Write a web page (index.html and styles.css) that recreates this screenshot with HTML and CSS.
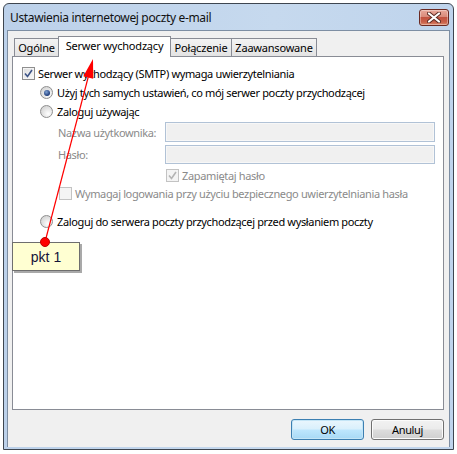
FILE: index.html
```html
<!DOCTYPE html>
<html>
<head>
<meta charset="utf-8">
<link rel="stylesheet" href="styles.css">
</head>
<body>
<div class="window">
  <div class="titlebar">
    <span class="title">Ustawienia internetowej poczty e-mail</span>
    <span class="close-btn">
      <svg width="14" height="11" viewBox="0 0 14 11"><path d="M2 1.5 L12 9.5 M12 1.5 L2 9.5" stroke="#5a2a22" stroke-width="4" stroke-linecap="round"/><path d="M2 1.5 L12 9.5 M12 1.5 L2 9.5" stroke="#fff" stroke-width="2.2" stroke-linecap="round"/></svg>
    </span>
  </div>
  <div class="client">
    <div class="tabs">
      <span class="tab tab-ogolne">Ogólne</span>
      <span class="tab tab-active">Serwer wychodzący</span>
      <span class="tab tab-polaczenie">Połączenie</span>
      <span class="tab tab-zaaw">Zaawansowane</span>
    </div>
    <div class="panel">
      <div class="row row1">
        <span class="check checked"><svg width="9" height="9" viewBox="0 0 9 9"><path d="M1 4.5 L3.5 7.5 L8 1" fill="none" stroke="#3d5487" stroke-width="1.6"/></svg></span>
        <span class="label">Serwer wychodzący (SMTP) wymaga uwierzytelniania</span>
      </div>
      <div class="row row2">
        <span class="radio selected"><span class="dot"></span></span>
        <span class="label">Użyj tych samych ustawień, co mój serwer poczty przychodzącej</span>
      </div>
      <div class="row row3">
        <span class="radio"></span>
        <span class="label">Zaloguj używając</span>
      </div>
      <div class="row row4">
        <span class="field-label disabled">Nazwa użytkownika:</span>
        <span class="input"></span>
      </div>
      <div class="row row5">
        <span class="field-label disabled">Hasło:</span>
        <span class="input"></span>
      </div>
      <div class="row row6">
        <span class="check checked dis"><svg width="9" height="9" viewBox="0 0 9 9"><path d="M1 4.5 L3.5 7.5 L8 1" fill="none" stroke="#b4b4b4" stroke-width="1.6"/></svg></span>
        <span class="label disabled">Zapamiętaj hasło</span>
      </div>
      <div class="row row7">
        <span class="check dis"></span>
        <span class="label disabled">Wymagaj logowania przy użyciu bezpiecznego uwierzytelniania hasła</span>
      </div>
      <div class="row row8">
        <span class="radio"></span>
        <span class="label">Zaloguj do serwera poczty przychodzącej przed wysłaniem poczty</span>
      </div>
    </div>
    <div class="footer">
      <span class="btn btn-default">OK</span>
      <span class="btn">Anuluj</span>
    </div>
  </div>
</div>

<svg class="arrow" width="457" height="454" viewBox="0 0 457 454">
  <line x1="45" y1="242" x2="88.5" y2="76" stroke="#ff0000" stroke-width="1.2"/>
  <polygon points="93,59 83.3,76.3 93.2,78.8" fill="#ff0000"/>
</svg>
<div class="callout">pkt 1</div>
<span class="red-dot"></span>
</body>
</html>
```

FILE: styles.css
```css
html, body {
  margin: 0;
  padding: 0;
}
body {
  width: 457px;
  height: 454px;
  background: #ffffff;
  position: relative;
  overflow: hidden;
  font-family: "Noto Sans", "Open Sans", sans-serif;
  font-size: 11px;
  letter-spacing: -0.35px;
  color: #000;
}
.window {
  margin: 3px 0 0 3px;
  width: 451px;
  height: 447px;
  box-sizing: border-box;
  border: 1px solid #3e4650;
  border-radius: 6px 6px 0 0;
  background: linear-gradient(to right, #bcd1ea, #c6d9ee 60%, #bfd4ec);
  padding: 0 3px 2px 3px;
  display: flex;
  flex-direction: column;
}
.titlebar {
  height: 26px;
  display: flex;
  align-items: center;
  justify-content: space-between;
  position: relative;
}
.title {
  font-size: 12px;
  color: #111;
  padding-left: 3px;
  padding-top: 1px;
  letter-spacing: -0.35px;
}
.close-btn {
  position: absolute;
  right: 1px;
  top: 5px;
  width: 30px;
  height: 17px;
  box-sizing: border-box;
  border: 1px solid #6b2a22;
  border-radius: 3px;
  background: linear-gradient(#e9a99b 0%, #d98a7a 45%, #c25340 50%, #c8604a 80%, #dc8a6d 100%);
  box-shadow: inset 0 0 0 1px rgba(255,255,255,0.35);
  display: flex;
  align-items: center;
  justify-content: center;
}
.client {
  flex: 1;
  background: #f0f0f0;
  border: 1px solid #7d8ea3;
  border-bottom: none;
  padding: 5px 5px 0 4px;
  display: flex;
  flex-direction: column;
}
.tabs {
  height: 20px;
  display: flex;
  align-items: flex-end;
  padding-left: 2px;
  position: relative;
  z-index: 1;
  letter-spacing: -0.2px;
}
.tab {
  box-sizing: border-box;
  height: 18px;
  border: 1px solid #898c95;
  border-bottom: none;
  background: linear-gradient(#f3f3f3, #e3e3e3);
  display: flex;
  align-items: center;
  justify-content: center;
  padding-bottom: 1px;
  white-space: nowrap;
}
.tab-ogolne { width: 45px; }
.tab-active {
  width: 113px;
  height: 21px;
  margin-left: -1px;
  margin-bottom: -1px;
  background: #ffffff;
  padding-bottom: 3px;
  position: relative;
  z-index: 2;
}
.tab-polaczenie { width: 62px; margin-left: -1px; }
.tab-zaaw { width: 86px; margin-left: -1px; }
.panel {
  height: 354px;
  box-sizing: border-box;
  border: 1px solid #898c95;
  background: #ffffff;
  padding-top: 7px;
  display: flex;
  flex-direction: column;
}
.row {
  display: flex;
  align-items: center;
  white-space: nowrap;
}
.row1 { height: 19px; padding-left: 9px; }
.row2 { height: 19px; padding-left: 27px; }
.row3 { height: 19px; padding-left: 27px; }
.row4 { height: 20px; margin-top: 1px; padding-left: 45px; }
.row5 { height: 19px; margin-top: 3px; padding-left: 45px; }
.row6 { height: 18px; margin-top: 2px; padding-left: 153px; }
.row7 { height: 18px; padding-left: 46px; }
.row8 { height: 19px; margin-top: 10px; padding-left: 27px; }
.label { margin-left: 3px; }
.row2 .label, .row3 .label, .row8 .label { margin-left: 4px; }
.disabled { color: #8a8a8a; }
.field-label {
  width: 107px;
  flex: none;
}
.input {
  width: 270px;
  height: 100%;
  box-sizing: border-box;
  border: 1px solid #b1c2d6;
  background: #f0f0f0;
  box-shadow: inset 0 0 0 1px #f7f7f7;
}
.check {
  width: 13px;
  height: 13px;
  box-sizing: border-box;
  border: 1px solid #8f8f8f;
  background: linear-gradient(135deg, #dcdcdc, #fbfbfb);
  box-shadow: inset 0 0 0 1px #f4f4f4;
  display: flex;
  align-items: center;
  justify-content: center;
  flex: none;
}
.check.dis {
  border-color: #c3c3c3;
  background: #f4f4f4;
  box-shadow: none;
}
.radio {
  width: 13px;
  height: 13px;
  box-sizing: border-box;
  border: 1px solid #8f8f8f;
  border-radius: 50%;
  background: radial-gradient(circle at 65% 70%, #ffffff 0%, #e6e6e6 45%, #c9c9c9 100%);
  display: flex;
  align-items: center;
  justify-content: center;
  flex: none;
}
.radio .dot {
  width: 6px;
  height: 6px;
  border-radius: 50%;
  background: radial-gradient(circle at 40% 35%, #7fa2d4, #1c3a78 70%);
}
.footer {
  display: flex;
  justify-content: flex-end;
  gap: 7px;
  padding-top: 9px;
}
.btn {
  width: 73px;
  height: 21px;
  box-sizing: border-box;
  border: 1px solid #707070;
  border-radius: 3px;
  background: linear-gradient(#f2f2f2 0%, #ebebeb 48%, #dddddd 52%, #cfcfcf 100%);
  box-shadow: inset 0 0 0 1px #fbfbfb;
  display: flex;
  align-items: center;
  justify-content: center;
  color: #000;
}
.btn-default {
  border-color: #3c7fb1;
  background: linear-gradient(#eaf6fd 0%, #d9f0fc 48%, #bee6fd 52%, #a7d9f5 100%);
  box-shadow: inset 0 0 0 1px #c4e5f6;
}
.arrow {
  position: absolute;
  left: 0;
  top: 0;
  pointer-events: none;
}
.callout {
  position: absolute;
  left: 12px;
  top: 242px;
  width: 68px;
  height: 29px;
  box-sizing: border-box;
  border: 1px solid #6e6e6e;
  background: #ffffd2;
  box-shadow: 2px 2px 0 #a9a9a9;
  display: flex;
  align-items: center;
  justify-content: center;
  font-family: "Liberation Sans", Arial, sans-serif;
  font-size: 14px;
  letter-spacing: 0;
  color: #14143a;
  padding-top: 1px;
}
.red-dot {
  position: absolute;
  left: 40px;
  top: 237px;
  width: 10px;
  height: 10px;
  box-sizing: border-box;
  border-radius: 50%;
  background: #ff0000;
  border: 1px solid #c00000;
}
```
